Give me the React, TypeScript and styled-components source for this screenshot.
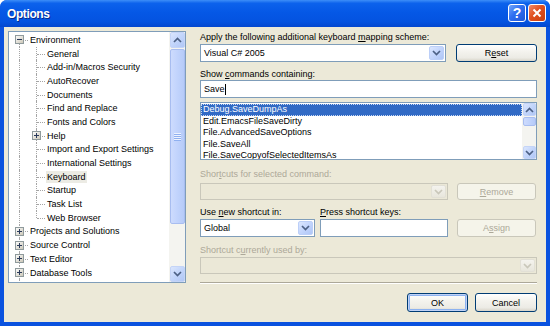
import React from "react";
import styled, { createGlobalStyle } from "styled-components";

const GlobalStyle = createGlobalStyle`
  html, body { margin: 0; padding: 0; background: #ffffff; }
  body {
    font-family: "Liberation Sans", Arial, sans-serif;
    font-size: 9px;
    color: #000;
  }
  * { box-sizing: border-box; }
`;

const Window = styled.div`
  width: 550px;
  height: 326px;
  display: flex;
  flex-direction: column;
  background: #0a52df;
  border-radius: 7px 7px 0 0;
  overflow: hidden;
`;

const TitleBar = styled.div`
  height: 27px;
  flex: none;
  display: flex;
  align-items: flex-start;
  padding: 0 4px 0 7px;
  background: linear-gradient(
    #3d8ef8 0%,
    #0c62ec 12%,
    #0558e6 45%,
    #0453e0 80%,
    #0347cf 100%
  );
`;

const Title = styled.span`
  flex: 1;
  margin-top: 7px;
  font-size: 12px;
  font-weight: bold;
  letter-spacing: -0.4px;
  color: #fff;
  text-shadow: 1px 1px 0 #0a2a8a;
`;

const CaptionButtons = styled.div`
  display: flex;
  gap: 2px;
  margin-top: 4px;
`;

const CaptionButton = styled.div<{ $close?: boolean }>`
  width: 18px;
  height: 18px;
  border: 1px solid #fff;
  border-radius: 3px;
  display: flex;
  align-items: center;
  justify-content: center;
  color: #fff;
  font-size: 14px;
  font-weight: bold;
  background: ${(p) =>
    p.$close
      ? "linear-gradient(135deg, #f08a6a 0%, #e0501f 45%, #c9400f 100%)"
      : "linear-gradient(135deg, #72a6fb 0%, #2f6ff0 45%, #1e56d8 100%)"};
`;

const Body = styled.div`
  flex: 1;
  margin: 0 4px 4px;
  background: #ece9d8;
  display: flex;
  gap: 14px;
  padding: 4px 9px 0 4px;
`;

/* ---------- tree ---------- */

const TreeBox = styled.div`
  width: 178px;
  height: 252px;
  flex: none;
  border: 1px solid #7f9db9;
  background: #fff;
  display: flex;
`;

const TreeList = styled.div`
  flex: 1;
  overflow: hidden;
  padding: 1px 0 0 2px;
`;

const TreeRow = styled.div`
  height: 13.7px;
  display: flex;
  align-items: center;
  white-space: nowrap;
`;

type Line = "full" | "top" | "bottom" | "none";

const Cell = styled.span<{ $v: Line; $h?: boolean }>`
  position: relative;
  width: 17px;
  height: 100%;
  flex: none;
  &::before {
    content: "";
    position: absolute;
    left: 8px;
    top: ${(p) => (p.$v === "bottom" ? "50%" : "0")};
    bottom: ${(p) => (p.$v === "top" ? "50%" : "0")};
    border-left: 1px dotted #a5a5a5;
    display: ${(p) => (p.$v === "none" ? "none" : "block")};
  }
  &::after {
    content: "";
    position: absolute;
    left: 9px;
    right: 0;
    top: 50%;
    border-top: 1px dotted #a5a5a5;
    display: ${(p) => (p.$h ? "block" : "none")};
  }
  svg {
    position: absolute;
    left: 4px;
    top: calc(50% - 4.5px);
    z-index: 1;
  }
`;

const TreeLabel = styled.span<{ $selected?: boolean }>`
  padding: 0 1px;
  margin-left: 1px;
  line-height: 12px;
  background: ${(p) => (p.$selected ? "#ecebe4" : "transparent")};
`;

const Expander = ({ open }: { open: boolean }) => (
  <svg width="9" height="9" viewBox="0 0 9 9">
    <defs>
      <linearGradient id={open ? "gm" : "gp"} x1="0" y1="0" x2="1" y2="1">
        <stop offset="0" stopColor="#ffffff" />
        <stop offset="1" stopColor="#c9c4b4" />
      </linearGradient>
    </defs>
    <rect x="0.5" y="0.5" width="8" height="8" fill={`url(#${open ? "gm" : "gp"})`} stroke="#8f9a9c" />
    <path d="M2 4.5H7" stroke="#2a3a5a" strokeWidth="1" />
    {!open && <path d="M4.5 2V7" stroke="#2a3a5a" strokeWidth="1" />}
  </svg>
);

/* ---------- scrollbars ---------- */

const Scroll = styled.div<{ $w: number }>`
  width: ${(p) => p.$w}px;
  flex: none;
  display: flex;
  flex-direction: column;
  background: #f4f4f0;
  padding: 0;
`;

const ScrollBtn = styled.div<{ $h: number }>`
  height: ${(p) => p.$h}px;
  flex: none;
  margin: 0 0 0 1px;
  border: 1px solid #c4d4f7;
  border-radius: 2px;
  background: linear-gradient(135deg, #dbe6fd 0%, #c2d5fb 50%, #b1c7f5 100%);
  display: flex;
  align-items: center;
  justify-content: center;
`;

const Thumb = styled.div<{ $h: number }>`
  height: ${(p) => p.$h}px;
  flex: none;
  margin: 1px 0 0 1px;
  border: 1px solid #a8bdf0;
  border-radius: 2px;
  background: linear-gradient(90deg, #cddbfd 0%, #c1d3fc 50%, #b6cbf8 100%);
  display: flex;
  align-items: center;
  justify-content: center;
`;

const Grip = styled.span`
  width: 7px;
  height: 8px;
  background: repeating-linear-gradient(#eef3fe 0 1px, #8fb0f0 1px 2px);
`;

const Track = styled.div`
  flex: 1;
`;

const Chevron = ({ up, color = "#4d6185" }: { up?: boolean; color?: string }) => (
  <svg width="9" height="6" viewBox="0 0 9 6">
    <path
      d={up ? "M1 5L4.5 1.5L8 5" : "M1 1L4.5 4.5L8 1"}
      stroke={color}
      strokeWidth="1.7"
      fill="none"
    />
  </svg>
);

/* ---------- right panel ---------- */

const Panel = styled.div`
  width: 337px;
  display: flex;
  flex-direction: column;
`;

const Label = styled.div<{ $mt: number; $disabled?: boolean }>`
  height: 12px;
  line-height: 12px;
  margin-top: ${(p) => p.$mt}px;
  color: ${(p) => (p.$disabled ? "#aca899" : "#000")};
  white-space: nowrap;
`;

const Row = styled.div<{ $mt: number; $h: number }>`
  display: flex;
  height: ${(p) => p.$h}px;
  margin-top: ${(p) => p.$mt}px;
`;

const LabelRow = styled.div<{ $mt: number }>`
  display: grid;
  grid-template-columns: 120px 1fr;
  height: 12px;
  line-height: 12px;
  margin-top: ${(p) => p.$mt}px;
`;

const Combo = styled.div<{ $w: number; $disabled?: boolean }>`
  width: ${(p) => p.$w}px;
  flex: none;
  display: flex;
  align-items: stretch;
  padding: 1px;
  border: 1px solid ${(p) => (p.$disabled ? "#c9c7ba" : "#7f9db9")};
  background: ${(p) => (p.$disabled ? "#ebe8d7" : "#fff")};
`;

const ComboText = styled.span`
  flex: 1;
  padding-left: 2px;
  display: flex;
  align-items: center;
`;

const DropBtn = styled.span<{ $disabled?: boolean }>`
  width: 15px;
  border-radius: 2px;
  display: flex;
  align-items: center;
  justify-content: center;
  border: 1px solid ${(p) => (p.$disabled ? "#e2e0d6" : "#bccff8")};
  background: ${(p) =>
    p.$disabled
      ? "linear-gradient(#f4f3ee, #e8e6dc)"
      : "linear-gradient(135deg, #dce7fe 0%, #c3d5fc 50%, #afc6f6 100%)"};
`;

const TextBox = styled.div<{ $w?: number }>`
  width: ${(p) => (p.$w ? `${p.$w}px` : "100%")};
  flex: none;
  border: 1px solid #7f9db9;
  background: #fff;
  padding-left: 3px;
  display: flex;
  align-items: center;
`;

const Caret = styled.span`
  width: 1px;
  height: 11px;
  background: #000;
`;

const ListBox = styled.div`
  height: 58px;
  margin-top: 4px;
  border: 1px solid #7f9db9;
  background: #fff;
  display: flex;
`;

const ListItems = styled.div`
  flex: 1;
  padding-top: 1px;
  overflow: hidden;
`;

const ListItem = styled.div<{ $selected?: boolean }>`
  height: 11.5px;
  line-height: 11.5px;
  padding-left: 2px;
  white-space: nowrap;
  color: ${(p) => (p.$selected ? "#fff" : "#000")};
  background: ${(p) => (p.$selected ? "#316ac5" : "transparent")};
  outline: ${(p) => (p.$selected ? "1px dotted #c8d8f4" : "none")};
  outline-offset: -1px;
`;

const Button = styled.div<{ $w: number; $disabled?: boolean; $default?: boolean; $ml?: number }>`
  width: ${(p) => p.$w}px;
  flex: none;
  margin-left: ${(p) => p.$ml ?? 0}px;
  border: 1px solid ${(p) => (p.$disabled ? "#c9c7ba" : "#003c74")};
  border-radius: 3px;
  display: flex;
  align-items: center;
  justify-content: center;
  color: ${(p) => (p.$disabled ? "#aca899" : "#000")};
  background: ${(p) =>
    p.$disabled
      ? "#f5f4ea"
      : "linear-gradient(#ffffff 0%, #f4f3ee 40%, #ecebe5 80%, #d8d4c8 100%)"};
  box-shadow: ${(p) =>
    p.$default ? "inset 0 0 0 1px #c0d2f6, inset 0 0 0 2px #8db2f0" : "none"};
`;

const Separator = styled.div`
  height: 2px;
  margin-top: 8px;
  border-top: 1px solid #aca899;
  border-bottom: 1px solid #fff;
`;

const Footer = styled.div`
  display: flex;
  justify-content: flex-end;
  gap: 7px;
  height: 19px;
  margin-top: 9px;
`;

type Node = { label: string; level: number; box?: "open" | "closed"; last?: boolean; selected?: boolean };

const nodes: Node[] = [
  { label: "Environment", level: 0, box: "open" },
  { label: "General", level: 1 },
  { label: "Add-in/Macros Security", level: 1 },
  { label: "AutoRecover", level: 1 },
  { label: "Documents", level: 1 },
  { label: "Find and Replace", level: 1 },
  { label: "Fonts and Colors", level: 1 },
  { label: "Help", level: 1, box: "closed" },
  { label: "Import and Export Settings", level: 1 },
  { label: "International Settings", level: 1 },
  { label: "Keyboard", level: 1, selected: true },
  { label: "Startup", level: 1 },
  { label: "Task List", level: 1 },
  { label: "Web Browser", level: 1, last: true },
  { label: "Projects and Solutions", level: 0, box: "closed" },
  { label: "Source Control", level: 0, box: "closed" },
  { label: "Text Editor", level: 0, box: "closed" },
  { label: "Database Tools", level: 0, box: "closed" },
];

const commands = [
  "Debug.SaveDumpAs",
  "Edit.EmacsFileSaveDirty",
  "File.AdvancedSaveOptions",
  "File.SaveAll",
  "File.SaveCopyofSelectedItemsAs",
];

const Tree = () => (
  <TreeBox>
    <TreeList>
      {nodes.map((n, i) => (
        <TreeRow key={n.label}>
          {n.level === 0 ? (
            <Cell $v={i === 0 ? "bottom" : "full"} $h>
              {n.box && <Expander open={n.box === "open"} />}
            </Cell>
          ) : (
            <>
              <Cell $v="full" />
              <Cell $v={n.last ? "top" : "full"} $h>
                {n.box && <Expander open={false} />}
              </Cell>
            </>
          )}
          <TreeLabel $selected={n.selected}>{n.label}</TreeLabel>
        </TreeRow>
      ))}
      <TreeRow>
        <Cell $v="full" />
      </TreeRow>
    </TreeList>
    <Scroll $w={16}>
      <ScrollBtn $h={16}>
        <Chevron up />
      </ScrollBtn>
      <Thumb $h={175}>
        <Grip />
      </Thumb>
      <Track />
      <ScrollBtn $h={16}>
        <Chevron />
      </ScrollBtn>
    </Scroll>
  </TreeBox>
);

export default function App() {
  return (
    <>
      <GlobalStyle />
      <Window>
        <TitleBar>
          <Title>Options</Title>
          <CaptionButtons>
            <CaptionButton>?</CaptionButton>
            <CaptionButton $close>
              <svg width="10" height="10" viewBox="0 0 10 10">
                <path d="M1.5 1.5L8.5 8.5M8.5 1.5L1.5 8.5" stroke="#fff" strokeWidth="2" />
              </svg>
            </CaptionButton>
          </CaptionButtons>
        </TitleBar>
        <Body>
          <Tree />
          <Panel>
            <Label $mt={0}>
              Apply the following additional keyboard <u>m</u>apping scheme:
            </Label>
            <Row $mt={1} $h={18}>
              <Combo $w={246}>
                <ComboText>Visual C# 2005</ComboText>
                <DropBtn>
                  <Chevron />
                </DropBtn>
              </Combo>
              <Button $w={81} $ml={10}>
                R<u>e</u>set
              </Button>
            </Row>
            <Label $mt={6}>
              Show <u>c</u>ommands containing:
            </Label>
            <Row $mt={0} $h={18}>
              <TextBox>
                Save
                <Caret />
              </TextBox>
            </Row>
            <ListBox>
              <ListItems>
                {commands.map((c, i) => (
                  <ListItem key={c} $selected={i === 0}>
                    {c}
                  </ListItem>
                ))}
              </ListItems>
              <Scroll $w={14}>
                <ScrollBtn $h={13}>
                  <Chevron up />
                </ScrollBtn>
                <Thumb $h={9} />
                <Track />
                <ScrollBtn $h={13}>
                  <Chevron />
                </ScrollBtn>
              </Scroll>
            </ListBox>
            <Label $mt={8} $disabled>
              Shor<u>t</u>cuts for selected command:
            </Label>
            <Row $mt={3} $h={17}>
              <Combo $w={248} $disabled>
                <ComboText />
                <DropBtn $disabled>
                  <Chevron color="#c9c7ba" />
                </DropBtn>
              </Combo>
              <Button $w={79} $ml={9} $disabled>
                <u>R</u>emove
              </Button>
            </Row>
            <LabelRow $mt={6}>
              <span>
                Use <u>n</u>ew shortcut in:
              </span>
              <span>
                <u>P</u>ress shortcut keys:
              </span>
            </LabelRow>
            <Row $mt={1} $h={18}>
              <Combo $w={115}>
                <ComboText>Global</ComboText>
                <DropBtn>
                  <Chevron />
                </DropBtn>
              </Combo>
              <TextBox $w={128} style={{ marginLeft: 5 }} />
              <Button $w={79} $ml={9} $disabled>
                A<u>s</u>sign
              </Button>
            </Row>
            <Label $mt={7} $disabled>
              Shortcut c<u>u</u>rrently used by:
            </Label>
            <Row $mt={1} $h={17}>
              <Combo $w={337} $disabled>
                <ComboText />
                <DropBtn $disabled>
                  <Chevron color="#c9c7ba" />
                </DropBtn>
              </Combo>
            </Row>
            <Separator />
            <Footer>
              <Button $w={61} $default>
                OK
              </Button>
              <Button $w={62}>Cancel</Button>
            </Footer>
          </Panel>
        </Body>
      </Window>
    </>
  );
}
